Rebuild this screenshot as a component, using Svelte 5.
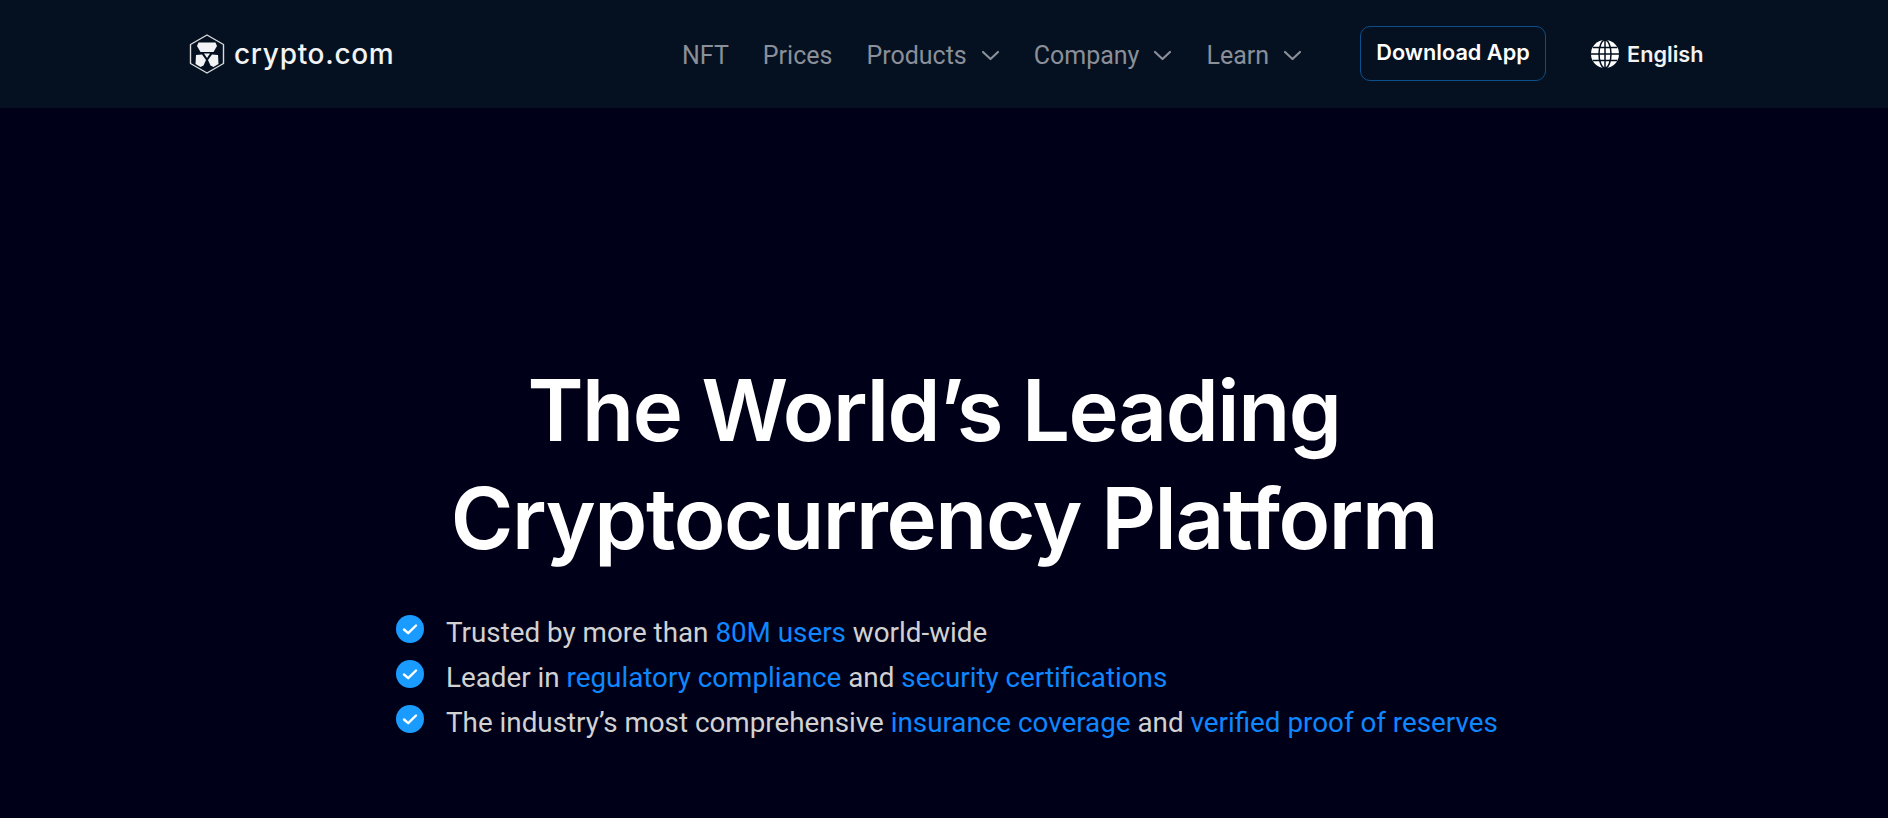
<script>
  const navItems = [
    { label: "NFT" },
    { label: "Prices" },
    { label: "Products", caret: true },
    { label: "Company", caret: true },
    { label: "Learn", caret: true }
  ];
</script>

<div class="page">
  <header class="topbar">
    <a class="logo" href="#top">
      <svg width="36" height="40" viewBox="0 0 36 40" fill="none">
        <path d="M18 1 34.500 10.500v19L18 39 1.500 29.500v-19Z" stroke="#d8dadd" stroke-width="1.400" stroke-linejoin="round" />
        <path d="M9.500 8.500h17l1.500 3.500-3.500 6h-13l-3.500-6Z" fill="#f2f3f4" />
        <path d="M7 21l6-.5 4 5.500-2.500 5.500-3 1.500-5-3Z" fill="#f2f3f4" />
        <path d="M29 21l-6-.5-4 5.500 2.500 5.500 3 1.500 5-3Z" fill="#f2f3f4" />
        <path d="M15 19.500h6l-3 4.500Z" fill="#f2f3f4" />
      </svg>
      <span>crypto.com</span>
    </a>

    <nav class="links">
      {#each navItems as item}
        <a href="#top">
          {item.label}
          {#if item.caret}
            <svg width="19" height="11" viewBox="0 0 19 11" fill="none">
              <path d="M2 2l7.500 7L17 2" stroke="#8a8f99" stroke-width="2.200" stroke-linecap="round" stroke-linejoin="round" />
            </svg>
          {/if}
        </a>
      {/each}
    </nav>

    <button class="download">Download App</button>

    <div class="lang">
      <svg width="28" height="28" viewBox="0 0 28 28" fill="none">
        <circle cx="14" cy="14" r="14" fill="#fff" />
        <g stroke="#05101f" stroke-width="1.500">
          <ellipse cx="14" cy="14" rx="6" ry="14" />
          <path d="M14 0v28M0 14h28M2 7.500h24M2 20.500h24" />
        </g>
      </svg>
      <span>English</span>
    </div>
  </header>

  <main class="hero">
    <h1>The World’s Leading&nbsp;<br />Cryptocurrency Platform</h1>
    <ul>
      <li>
        <svg class="check" width="28" height="28" viewBox="0 0 28 28"><circle cx="14" cy="14" r="14" fill="#1a9bff" /><path d="M8 14.500l4.200 3.700L20 10.500" fill="none" stroke="#fff" stroke-width="2.400" stroke-linecap="round" stroke-linejoin="round" /></svg>
        <span>Trusted by more than <b>80M users</b> world-wide</span>
      </li>
      <li>
        <svg class="check" width="28" height="28" viewBox="0 0 28 28"><circle cx="14" cy="14" r="14" fill="#1a9bff" /><path d="M8 14.500l4.200 3.700L20 10.500" fill="none" stroke="#fff" stroke-width="2.400" stroke-linecap="round" stroke-linejoin="round" /></svg>
        <span>Leader in <b>regulatory compliance</b> and <b>security certifications</b></span>
      </li>
      <li>
        <svg class="check" width="28" height="28" viewBox="0 0 28 28"><circle cx="14" cy="14" r="14" fill="#1a9bff" /><path d="M8 14.500l4.200 3.700L20 10.500" fill="none" stroke="#fff" stroke-width="2.400" stroke-linecap="round" stroke-linejoin="round" /></svg>
        <span>The industry’s most comprehensive <b>insurance coverage</b> and <b>verified proof of reserves</b></span>
      </li>
    </ul>
  </main>
</div>

<style>
  :global(body) {
    margin: 0;
    background: #000119;
  }

  .page {
    height: 818px;
    overflow: hidden;
    background: #000119;
    font-family: Roboto, "Liberation Sans", sans-serif;
  }

  .topbar {
    display: flex;
    align-items: center;
    height: 108px;
    padding-left: 189px;
    background: #051120;
  }

  .logo {
    display: flex;
    align-items: center;
    gap: 9px;
    color: #f2f3f4;
    text-decoration: none;
    font-family: Inter, sans-serif;
    font-size: 28px;
    font-weight: 500;
    letter-spacing: 0.700px;
    width: 493px;
  }

  .logo span {
    margin-top: -1px;
  }

  .links {
    display: flex;
    align-items: center;
    gap: 34px;
    width: 678px;
    padding-top: 2px;
  }

  .links a {
    display: flex;
    align-items: center;
    gap: 14px;
    color: #8a8f99;
    font-size: 25px;
    text-decoration: none;
  }

  .download {
    width: 186px;
    height: 55px;
    box-sizing: border-box;
    border: 1px solid #0d4f8a;
    border-radius: 10px;
    background: transparent;
    color: #fff;
    font-family: Inter, sans-serif;
    font-size: 21.700px;
    font-weight: 600;
    padding: 0 0 3px;
    margin-bottom: 1px;
  }

  .lang {
    display: flex;
    align-items: center;
    gap: 8px;
    margin-left: 45px;
    color: #f2f2f2;
    font-family: Inter, sans-serif;
    font-size: 21.700px;
    font-weight: 600;
  }

  .hero {
    display: flex;
    flex-direction: column;
    align-items: center;
    padding-top: 249px;
  }

  h1 {
    margin: 0;
    color: #fff;
    font-family: Inter, sans-serif;
    font-size: 85px;
    font-weight: 640;
    letter-spacing: -1.400px;
    line-height: 108px;
    text-align: center;
  }

  ul {
    list-style: none;
    margin: 35px 0 0;
    padding: 0;
    width: 1096px;
  }

  li {
    display: flex;
    align-items: center;
    gap: 22px;
    height: 45px;
    color: #d2d2d2;
    font-size: 27.800px;
    white-space: nowrap;
  }

  li span {
    margin-top: 4px;
  }

  .check {
    flex-shrink: 0;
    margin-top: -4px;
  }

  li b {
    color: #0f87ff;
    font-weight: 400;
  }
</style>
